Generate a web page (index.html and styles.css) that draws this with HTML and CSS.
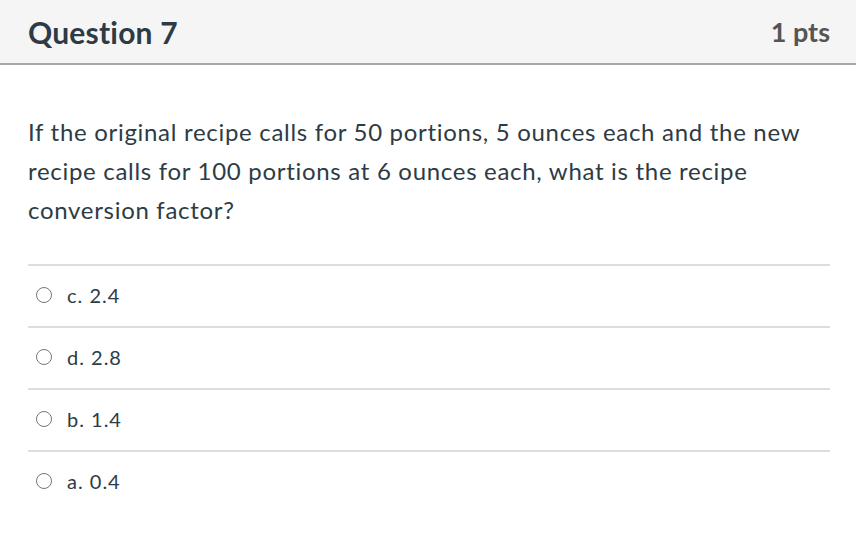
FILE: index.html
```html
<!DOCTYPE html>
<html>
<head>
<meta charset="utf-8">
<link rel="stylesheet" href="styles.css">
</head>
<body>
<div class="question">
  <div class="header">
    <h2 class="title">Question 7</h2>
    <div class="pts">1 pts</div>
  </div>
  <div class="body">
    <p class="text">If the original recipe calls for 50 portions, 5 ounces each and the new recipe calls for 100 portions at 6 ounces each, what is the recipe conversion factor?</p>
    <div class="answers">
      <label class="answer"><span class="radio"></span><span class="label">c. 2.4</span></label>
      <label class="answer"><span class="radio"></span><span class="label">d. 2.8</span></label>
      <label class="answer"><span class="radio"></span><span class="label">b. 1.4</span></label>
      <label class="answer"><span class="radio"></span><span class="label">a. 0.4</span></label>
    </div>
  </div>
</div>
</body>
</html>
```

FILE: styles.css
```css
html, body {
  margin: 0;
  padding: 0;
  background: #ffffff;
}
body {
  font-family: Lato, "Open Sans", sans-serif;
  color: #2d3b45;
  width: 856px;
  height: 536px;
  overflow: hidden;
}
.header {
  height: 63px;
  background: #f5f5f5;
  border-bottom: 2px solid #a8a8a8;
  display: flex;
  align-items: center;
  justify-content: space-between;
  padding: 0 26px 0 28px;
}
.title {
  margin: 0;
  font-size: 30px;
  font-weight: 700;
  letter-spacing: 0.2px;
  color: #2d3b45;
}
.pts {
  font-size: 27px;
  font-weight: 700;
  color: #555555;
}
.body {
  padding: 0 24px 0 28px;
}
.text {
  margin: 47px 0 35px 0;
  font-size: 24px;
  line-height: 39px;
  letter-spacing: 0.7px;
}
.answers {
  display: flex;
  flex-direction: column;
  margin-right: 2px;
}
.answer {
  display: flex;
  align-items: center;
  height: 60px;
  border-top: 2px solid #dddddd;
  font-size: 20px;
  letter-spacing: 1px;
  padding-bottom: 2px;
  box-sizing: border-box;
  height: 62px;
}
.radio {
  width: 14px;
  height: 14px;
  border: 1.6px solid #777777;
  border-radius: 50%;
  margin-left: 8px;
  margin-right: 15px;
}
.label {
  color: #2d3b45;
}
```
